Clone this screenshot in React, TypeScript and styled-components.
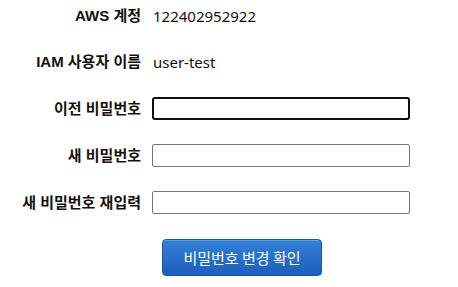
import styled, { createGlobalStyle } from 'styled-components';

const GlobalStyle = createGlobalStyle`
  body { margin: 0; background: #fff; font-family: "Noto Sans", "Noto Sans CJK KR", sans-serif; }
`;

const Form = styled.form`
  display: grid; grid-template-columns: 141px 258px; column-gap: 11px; row-gap: 24px;
  padding-top: 5px; align-items: center;
`;
const Label = styled.label`
  text-align: right; font-weight: 700; font-size: 15px; color: #111;
  font-family: "Liberation Sans", "Noto Sans CJK KR", sans-serif; line-height: 22px;
  white-space: nowrap;
`;
const Value = styled.div`
  font-size: 15px; color: #111; line-height: 22px; padding-left: 1px;
`;
const Input = styled.input<{ $focused?: boolean }>`
  box-sizing: border-box; width: 258px; height: 23px; margin: 0; padding: 0 3px;
  border: 1px solid #767676; border-radius: 2px; font-size: 14px; outline: none;
  ${p => p.$focused && 'border: 2px solid #101010; border-radius: 3px;'}
`;
const Actions = styled.div`
  grid-column: 2; padding-left: 10px; margin-top: 1px;
`;
const Button = styled.button`
  width: 160px; height: 37px; border-radius: 4px; border: 1px solid #1a56a8;
  background: linear-gradient(#3380d8, #1d5fbb); color: #fff; font-size: 15px;
  font-family: "Noto Sans CJK KR", sans-serif; cursor: pointer;
  box-shadow: inset 0 1px 0 rgba(255,255,255,0.25);
`;

export default function App() {
  return (
    <>
      <GlobalStyle />
      <Form onSubmit={e => e.preventDefault()}>
        <Label>AWS 계정</Label>
        <Value>122402952922</Value>
        <Label>IAM 사용자 이름</Label>
        <Value>user-test</Value>
        <Label>이전 비밀번호</Label>
        <Input type="password" $focused />
        <Label>새 비밀번호</Label>
        <Input type="password" />
        <Label>새 비밀번호 재입력</Label>
        <Input type="password" />
        <Actions>
          <Button type="submit">비밀번호 변경 확인</Button>
        </Actions>
      </Form>
    </>
  );
}
